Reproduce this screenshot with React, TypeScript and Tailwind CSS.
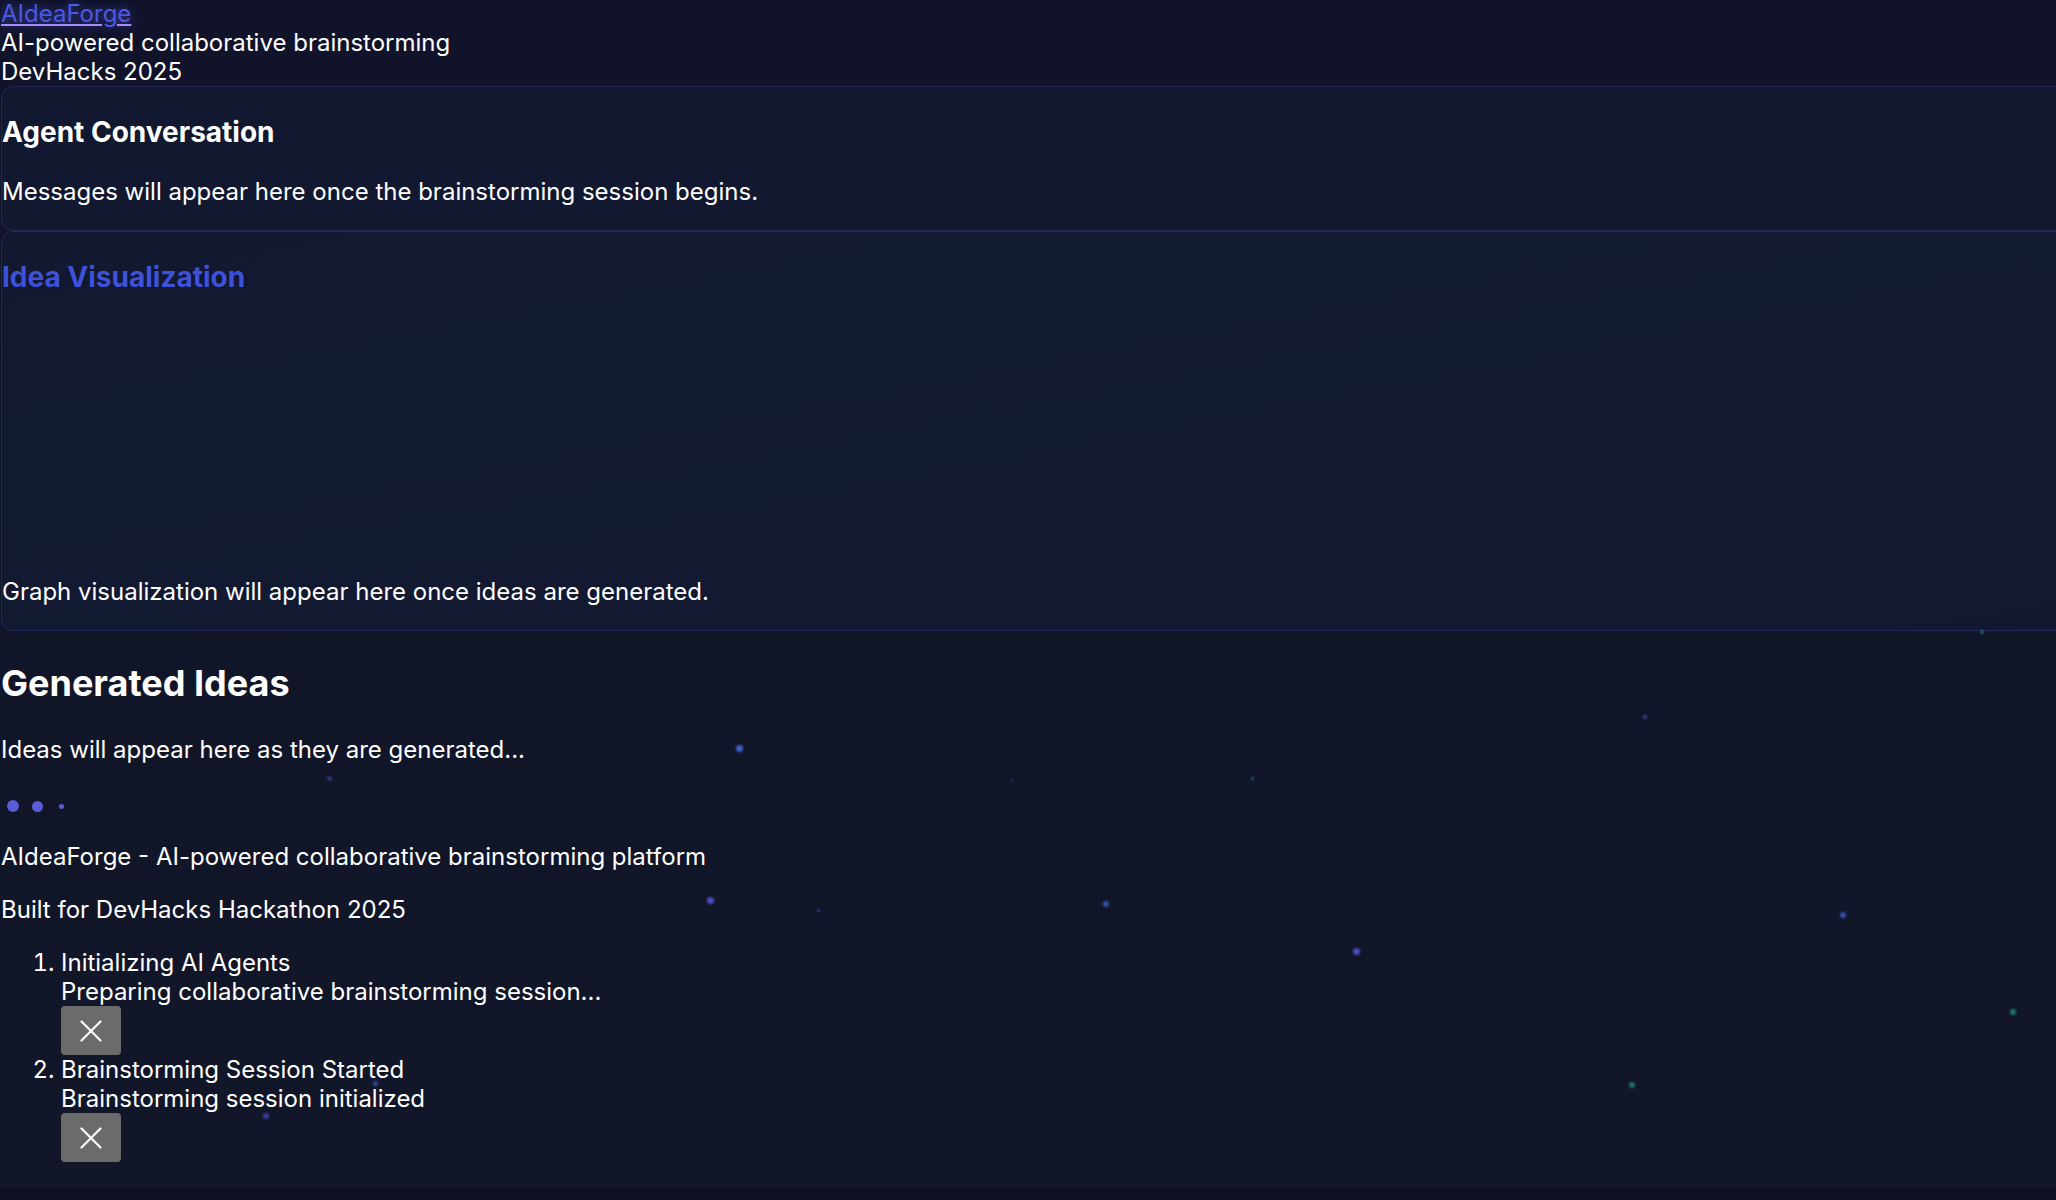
import React from 'react';

// scattered glow dots in the background
const particles = [
  { x: 736, y: 745, s: 7, c: 'bg-[#3b63c9]' },
  { x: 327, y: 776, s: 5, c: 'bg-[#2a3a7a]' },
  { x: 1010, y: 779, s: 3, c: 'bg-[#2c3a70]' },
  { x: 1251, y: 777, s: 3, c: 'bg-[#1f6f6a]' },
  { x: 1643, y: 715, s: 4, c: 'bg-[#4040a0]' },
  { x: 1980, y: 630, s: 4, c: 'bg-[#1f6f6a]' },
  { x: 707, y: 897, s: 7, c: 'bg-[#4a4fc0]' },
  { x: 817, y: 909, s: 3, c: 'bg-[#2c4aa0]' },
  { x: 1103, y: 901, s: 6, c: 'bg-[#3355b0]' },
  { x: 1353, y: 948, s: 7, c: 'bg-[#4a4fc0]' },
  { x: 1840, y: 912, s: 6, c: 'bg-[#3355b0]' },
  { x: 2010, y: 1009, s: 6, c: 'bg-[#1a7a66]' },
  { x: 1629, y: 1082, s: 6, c: 'bg-[#1a7a66]' },
  { x: 263, y: 1113, s: 6, c: 'bg-[#3a3fa8]' },
  { x: 373, y: 1081, s: 5, c: 'bg-[#2c4aa0]' },
];

const steps = [
  { title: 'Initializing AI Agents', desc: 'Preparing collaborative brainstorming session...' },
  { title: 'Brainstorming Session Started', desc: 'Brainstorming session initialized' },
];

function CloseIcon() {
  return (
    <svg width="22" height="22" viewBox="0 0 22 22" fill="none" stroke="white" strokeWidth="2.2" strokeLinecap="round">
      <path d="M1.5 1.5L20.5 20.5M20.5 1.5L1.5 20.5" />
    </svg>
  );
}

export default function App() {
  return (
    <div className="h-screen overflow-hidden bg-[#0d1020] font-['Inter','Liberation_Sans',sans-serif] text-[24px] leading-[normal] text-white">
      <div className="relative overflow-hidden bg-gradient-to-b from-[#10132a] via-[#111528] to-[#121629] pl-[1px]">
        {particles.map((p, i) => (
          <span
            key={i}
            className={`absolute rounded-full blur-[1px] ${p.c}`}
            style={{ left: p.x, top: p.y, width: p.s, height: p.s }}
          />
        ))}

        <header className="leading-[1.2]">
          <div>
            <a
              href="#"
              className="text-[#4a5ae0] underline decoration-[#a78bfa] decoration-2 underline-offset-[2px] [text-shadow:0_0_10px_rgba(99,102,241,0.6)]"
            >
              AIdeaForge
            </a>
          </div>
          <div>AI-powered collaborative brainstorming</div>
          <div>DevHacks 2025</div>
        </header>

        <section className="w-[calc(100%+40px)] rounded-[12px] border border-[#23275a] bg-[#111830]">
          <h3 className="mt-[28px] mb-[28px] text-[28px] font-bold">Agent Conversation</h3>
          <p className="mb-[24px]">Messages will appear here once the brainstorming session begins.</p>
        </section>

        <section className="w-[calc(100%+40px)] rounded-[12px] border border-[#23275a] bg-gradient-to-br from-[#111830] via-[#121a31] to-[#121830]">
          <h3 className="mt-[28px] mb-[28px] text-[28px] font-bold text-[#3d52d9]">Idea Visualization</h3>
          <div className="h-[231px]" />
          <p className="my-[24px]">Graph visualization will appear here once ideas are generated.</p>
        </section>

        <section className="relative">
          <h2 className="mt-[30px] mb-[30px] text-[36px] font-bold">Generated Ideas</h2>
          <p className="mb-[24px]">Ideas will appear here as they are generated...</p>
          <div className="flex h-[36px] items-center">
            <span className="flex w-[24px] justify-center">
              <span className="h-[12px] w-[12px] rounded-full bg-[#5b5bd6]" />
            </span>
            <span className="flex w-[24px] justify-center">
              <span className="h-[11px] w-[11px] rounded-full bg-[#5b5bd6]" />
            </span>
            <span className="flex w-[24px] justify-center">
              <span className="h-[5px] w-[5px] rounded-full bg-[#5b5bd6]" />
            </span>
          </div>
        </section>

        <footer className="relative">
          <p className="mt-[18px] mb-[24px]">AIdeaForge - AI-powered collaborative brainstorming platform</p>
          <p className="mb-[24px]">Built for DevHacks Hackathon 2025</p>
        </footer>

        <ol className="relative mb-[25px] list-decimal pl-[60px]">
          {steps.map((s) => (
            <li key={s.title}>
              <div>{s.title}</div>
              <div>{s.desc}</div>
              <button className="flex h-[49px] w-[60px] items-center justify-center rounded-[4px] bg-[#6b6b6b]">
                <CloseIcon />
              </button>
            </li>
          ))}
        </ol>
      </div>
    </div>
  );
}
